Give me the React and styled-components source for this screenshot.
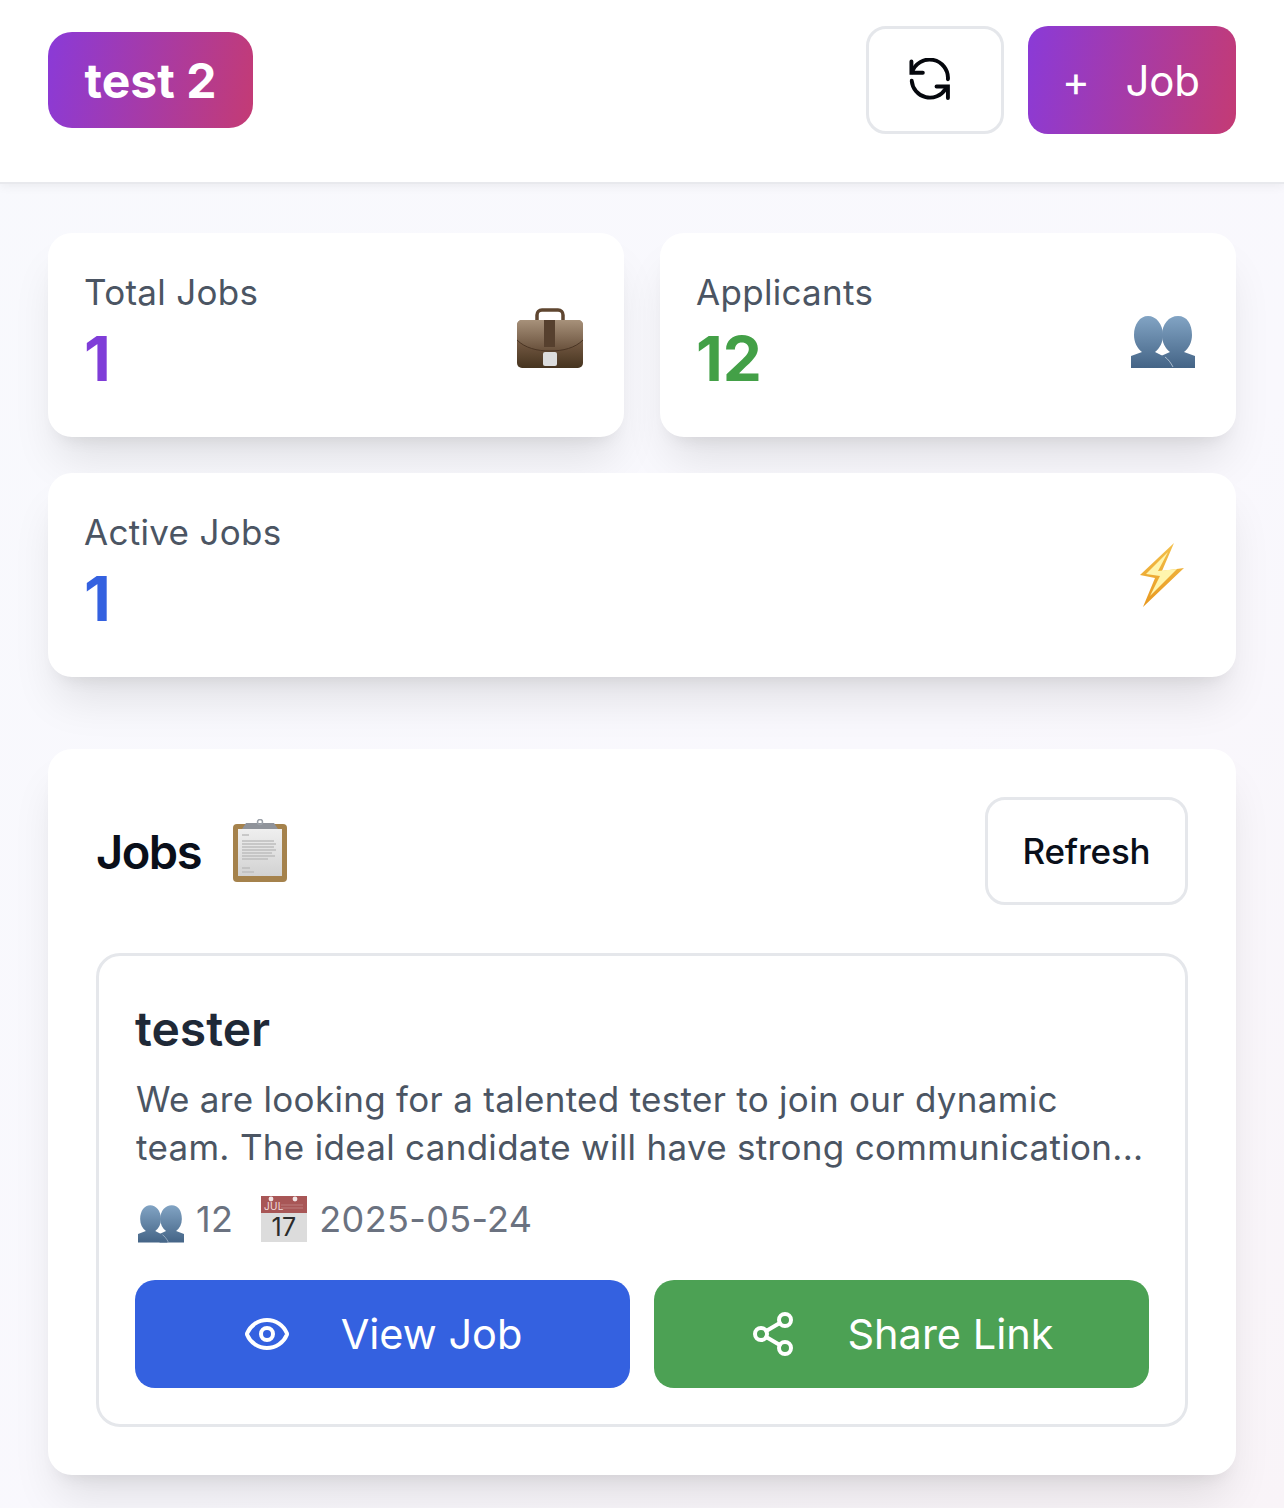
import React from 'react'
import styled, { createGlobalStyle } from 'styled-components'
import { LuEye, LuShare2 } from 'react-icons/lu'

const GlobalStyle = createGlobalStyle`
  html, body {
    margin: 0;
    padding: 0;
    background: #f9f8fc;
  }
  body {
    font-family: "Inter", "Liberation Sans", sans-serif;
    -webkit-font-smoothing: antialiased;
  }
  * { box-sizing: border-box; }
`

const gradient = 'linear-gradient(100deg, #8a3ad8 0%, #c43b74 100%)'
const cardShadow = '0 30px 45px -9px rgba(0, 0, 0, 0.1), 0 12px 18px -12px rgba(0, 0, 0, 0.1)'

const Page = styled.div`
  width: 1284px;
  height: 1508px;
  overflow: hidden;
  background: linear-gradient(135deg, #f8f9fd 0%, #f9f8fd 60%, #f9f4f8 100%);
`

const Header = styled.header`
  position: relative;
  height: 184px;
  padding: 26px 48px 0;
  background: #fff;
  border-bottom: 2px solid #e8e9ed;
  box-shadow: 0 3px 9px rgba(0, 0, 0, 0.05);
  display: flex;
  justify-content: space-between;
  align-items: flex-start;
`

const Brand = styled.div`
  margin-top: 6px;
  width: 205px;
  height: 96px;
  border-radius: 24px;
  background: ${gradient};
  color: #fff;
  font-size: 48px;
  font-weight: 700;
  display: flex;
  align-items: center;
  justify-content: center;
`

const Actions = styled.div`
  display: flex;
  gap: 24px;
`

const IconButton = styled.div`
  width: 138px;
  height: 108px;
  border: 3px solid #e5e7eb;
  border-radius: 20px;
  background: #fff;
  color: #05070d;
  display: flex;
  align-items: center;
  justify-content: center;
  padding-right: 10px;
`

const AddButton = styled.div`
  width: 208px;
  height: 108px;
  border-radius: 20px;
  background: ${gradient};
  color: #fff;
  font-size: 42px;
  letter-spacing: -0.2px;
  display: flex;
  align-items: center;
  gap: 36px;
  padding-left: 36px;
  span:first-child {
    margin-left: -2px;
  }
`

const Main = styled.main`
  padding: 49px 48px 0;
`

const StatGrid = styled.div`
  display: grid;
  grid-template-columns: 1fr 1fr;
  gap: 36px;
`

const StatCard = styled.div`
  grid-column: ${props => (props.$wide ? '1 / span 2' : 'auto')};
  height: 204px;
  padding: 0 41px 0 36px;
  border-radius: 24px;
  background: #fff;
  box-shadow: ${cardShadow};
  display: flex;
  justify-content: space-between;
  align-items: center;
`

const StatText = styled.div`
  align-self: flex-start;
  padding-top: 36px;
`

const StatLabel = styled.div`
  font-size: 35px;
  line-height: 46px;
  letter-spacing: 0.3px;
  color: #4b5563;
`

const StatValue = styled.div`
  margin-top: 8px;
  font-size: 62px;
  line-height: 72px;
  font-weight: 700;
  color: ${props => props.$color};
`

const Panel = styled.section`
  margin-top: 72px;
  height: 726px;
  padding: 48px;
  border-radius: 24px;
  background: #fff;
  box-shadow: ${cardShadow};
`

const PanelHead = styled.div`
  display: flex;
  justify-content: space-between;
  align-items: center;
  height: 108px;
`

const PanelTitle = styled.h2`
  margin: 0;
  display: flex;
  align-items: center;
  gap: 32px;
  font-size: 47px;
  font-weight: 600;
  color: #0a0f1a;
  letter-spacing: -1.5px;
`

const OutlineButton = styled.div`
  width: 203px;
  height: 108px;
  border: 3px solid #e5e7eb;
  border-radius: 20px;
  font-size: 35px;
  font-weight: 500;
  letter-spacing: -0.2px;
  color: #0a0f1a;
  display: flex;
  align-items: center;
  justify-content: center;
`

const JobCard = styled.article`
  margin-top: 48px;
  height: 474px;
  padding: 44px 36px 0;
  border: 3px solid #e5e7eb;
  border-radius: 24px;
`

const JobTitle = styled.h3`
  margin: 0;
  font-size: 48px;
  line-height: 58px;
  font-weight: 600;
  color: #1f2937;
`

const JobDesc = styled.p`
  margin: 17px 0 0 1px;
  font-size: 35px;
  line-height: 48px;
  letter-spacing: 0.3px;
  color: #4b5563;
  white-space: nowrap;
`

const Meta = styled.div`
  margin-top: 24px;
  padding-left: 3px;
  height: 48px;
  display: flex;
  align-items: center;
  font-size: 36px;
  letter-spacing: 0.35px;
  color: #6b7280;
`

const MetaItem = styled.span`
  display: flex;
  align-items: center;
  gap: 12px;
  margin-right: 28px;
`

const ButtonRow = styled.div`
  margin-top: 37px;
  display: grid;
  grid-template-columns: 1fr 1fr;
  gap: 24px;
`

const ActionButton = styled.div`
  height: 108px;
  border-radius: 20px;
  background: ${props => props.$color};
  color: #fff;
  font-size: 41.5px;
  display: flex;
  align-items: center;
  justify-content: center;
  gap: 50px;
`

const RefreshIcon = () => (
  <svg width="44" height="44" viewBox="-1.5 -1.5 27 27" fill="none" stroke="currentColor" strokeWidth="2.4" strokeLinecap="round" strokeLinejoin="miter">
    <path d="M0.6 0.6v7h7" />
    <path d="M1 7.2A11.3 11.3 0 0 1 23 11.5" />
    <path d="M0.8 12.5A11.2 11.2 0 0 0 21.5 17.5" />
    <path d="M23 23v-7h-7" />
  </svg>
)

const Briefcase = () => (
  <svg width="66" height="72" viewBox="0 -9 66 72">
    <defs>
      <linearGradient id="caseBody" x1="0" y1="0" x2="0" y2="1">
        <stop offset="0" stopColor="#a08a72" />
        <stop offset="0.5" stopColor="#705640" />
        <stop offset="1" stopColor="#46341f" />
      </linearGradient>
      <linearGradient id="caseFlap" x1="0" y1="0" x2="0" y2="1">
        <stop offset="0" stopColor="#a7917a" />
        <stop offset="1" stopColor="#68503b" />
      </linearGradient>
    </defs>
    <path d="M20 12V7c0-3 2-5 5-5h16c3 0 5 2 5 5v5" fill="none" stroke="#5f4630" strokeWidth="3.5" />
    <rect x="0" y="12" width="66" height="48" rx="5" fill="url(#caseBody)" />
    <path d="M0 17c0-3 2-5 5-5h56c3 0 5 2 5 5v15c-8 8-20 11-33 11S8 40 0 32z" fill="url(#caseFlap)" />
    <path d="M0 32c8 8 20 11 33 11s25-3 33-11" fill="none" stroke="#4a3524" strokeWidth="1" />
    <rect x="27" y="12" width="11" height="27" fill="#56402e" />
    <rect x="26" y="44" width="14" height="14" rx="2" fill="#dcdddd" />
  </svg>
)

const People = ({ size = 64 }) => (
  <svg width={size} height={size * 72 / 64} viewBox="0 -17 64 72">
    <defs>
      <linearGradient id="bust" x1="0" y1="0" x2="0" y2="1">
        <stop offset="0" stopColor="#82a4c4" />
        <stop offset="1" stopColor="#446486" />
      </linearGradient>
    </defs>
    <path d="M30 52V40l9-4c-5-4-8-10-8-17C31 8 38 0 47 0s14 8 14 19c0 7-3 13-8 17l11 4v12z" fill="url(#bust)" />
    <path d="M0 52V40l11-4C6 32 3 26 3 19 3 8 9 0 17 0s15 8 15 19c0 7-3 13-8 17l10 5 7 11z" fill="url(#bust)" />
    <path d="M34 41c3 2 6 6 8 10" fill="none" stroke="#c4d2e0" strokeWidth="0.8" />
  </svg>
)

const Bolt = () => (
  <svg width="66" height="72" viewBox="-11 -4 66 72">
    <defs>
      <linearGradient id="boltFill" x1="0" y1="0" x2="0" y2="1">
        <stop offset="0" stopColor="#f3c04c" />
        <stop offset="1" stopColor="#e8981f" />
      </linearGradient>
    </defs>
    <path d="M34 0L0 32l15 3L3 64l41-39-22 3z" fill="url(#boltFill)" />
    <path d="M28 9L6 31l14 2-10 20 27-27-19 2z" fill="#fff5ad" />
  </svg>
)

const Clipboard = () => (
  <svg width="54" height="64" viewBox="0 0 54 64">
    <defs>
      <linearGradient id="paper" x1="0" y1="0" x2="0" y2="1">
        <stop offset="0" stopColor="#efefef" />
        <stop offset="1" stopColor="#d2d2d2" />
      </linearGradient>
    </defs>
    <rect x="0" y="5" width="54" height="58" rx="4" fill="#a5824c" />
    <rect x="5" y="10" width="44" height="47" fill="url(#paper)" />
    <g stroke="#bdbdbd" strokeWidth="1.3">
      <path d="M9 16h7M9 22h32M9 25h34M9 28h32M9 31h34M9 34h30M9 37h33M9 40h26M9 49h8M9 53h12" />
    </g>
    <path d="M9 10l4-6h28l4 6z" fill="#8f939a" />
    <circle cx="27" cy="3" r="2.5" fill="none" stroke="#9aa0a8" strokeWidth="1.5" />
  </svg>
)

const Calendar = () => (
  <svg width="46" height="46" viewBox="0 0 46 46">
    <rect x="0" y="0" width="46" height="46" fill="#dcdcdc" />
    <rect x="0" y="0" width="46" height="17" fill="#a85656" />
    <path d="M20 12h22M20 9h22" stroke="#bc7c7c" strokeWidth="1" />
    <circle cx="10" cy="3" r="2.4" fill="#f2e6e6" />
    <circle cx="34" cy="3" r="2.4" fill="#f2e6e6" />
    <text x="3" y="14" fontSize="10" fill="#f2dede" fontFamily="Inter, sans-serif">JUL</text>
    <text x="23" y="39.5" fontSize="25" fill="#2b2b2b" textAnchor="middle" fontFamily="Inter, sans-serif">17</text>
  </svg>
)

export default function App() {
  return (
    <Page>
      <GlobalStyle />
      <Header>
        <Brand>test 2</Brand>
        <Actions>
          <IconButton><RefreshIcon /></IconButton>
          <AddButton><span>+</span><span>Job</span></AddButton>
        </Actions>
      </Header>
      <Main>
        <StatGrid>
          <StatCard>
            <StatText>
              <StatLabel>Total Jobs</StatLabel>
              <StatValue $color="#7f3dd8">1</StatValue>
            </StatText>
            <Briefcase />
          </StatCard>
          <StatCard>
            <StatText>
              <StatLabel>Applicants</StatLabel>
              <StatValue $color="#43a047">12</StatValue>
            </StatText>
            <People />
          </StatCard>
          <StatCard $wide>
            <StatText>
              <StatLabel>Active Jobs</StatLabel>
              <StatValue $color="#3461e0">1</StatValue>
            </StatText>
            <Bolt />
          </StatCard>
        </StatGrid>
        <Panel>
          <PanelHead>
            <PanelTitle>Jobs <Clipboard /></PanelTitle>
            <OutlineButton>Refresh</OutlineButton>
          </PanelHead>
          <JobCard>
            <JobTitle>tester</JobTitle>
            <JobDesc>
              We are looking for a talented tester to join our dynamic<br />
              team. The ideal candidate will have strong communication...
            </JobDesc>
            <Meta>
              <MetaItem><People size={46} /> 12</MetaItem>
              <MetaItem><Calendar /> 2025-05-24</MetaItem>
            </Meta>
            <ButtonRow>
              <ActionButton $color="#3461e0"><LuEye size={48} strokeWidth={2} />View Job</ActionButton>
              <ActionButton $color="#4ca154"><LuShare2 size={48} strokeWidth={2} />Share Link</ActionButton>
            </ButtonRow>
          </JobCard>
        </Panel>
      </Main>
    </Page>
  )
}
